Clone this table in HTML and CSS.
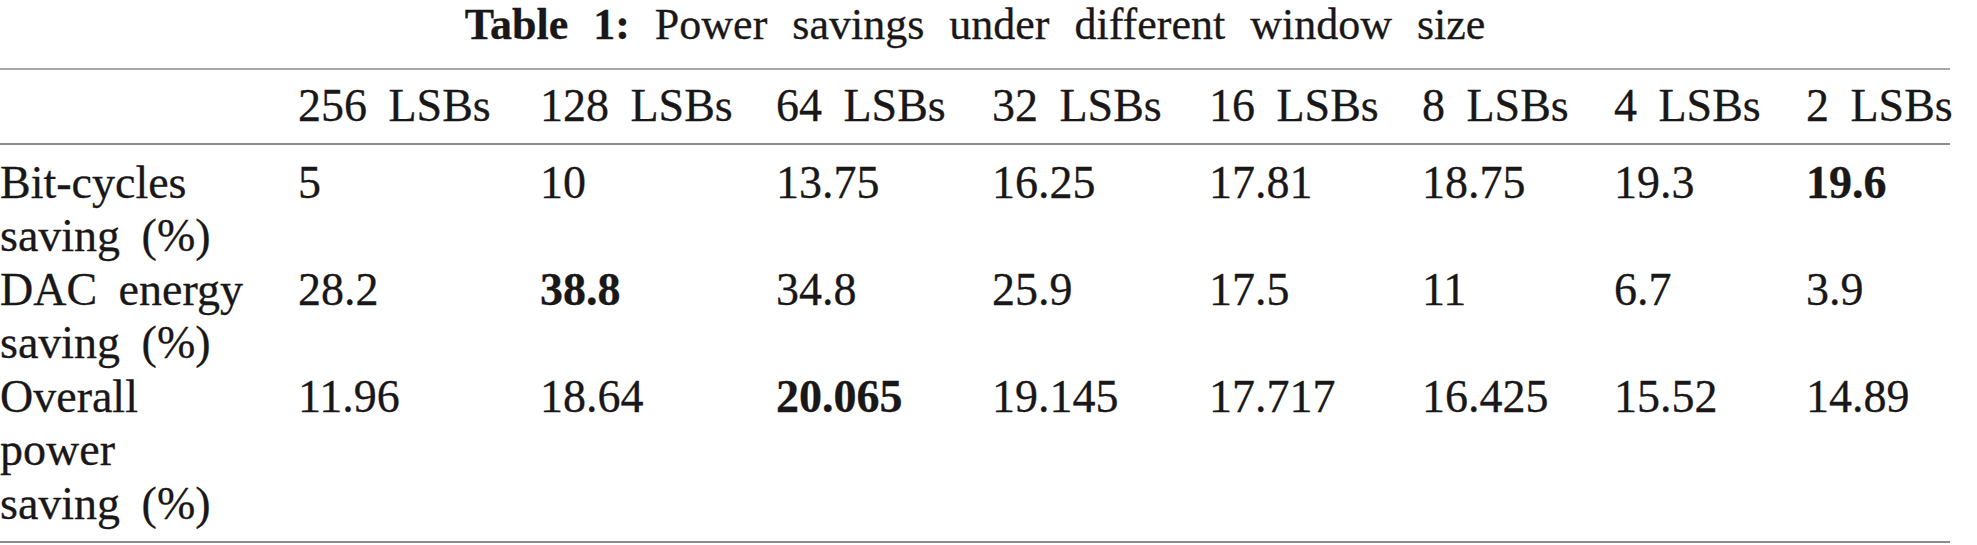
FILE: index.html
```html
<!DOCTYPE html>
<html lang="en">
<head>
    <meta charset="UTF-8">
    <meta name="viewport" content="width=device-width, initial-scale=1.0">
    <title>Table 1: Power savings under different window size</title>
    <link rel="stylesheet" href="styles.css">
</head>
<body>
    <div class="table-wrap">
        <div class="caption"><b>Table 1:</b> Power savings under different window size</div>

        <table class="data-table">
            <colgroup>
                <col class="col-label">
                <col class="col-256">
                <col class="col-128">
                <col class="col-64">
                <col class="col-32">
                <col class="col-16">
                <col class="col-8">
                <col class="col-4">
                <col class="col-2">
            </colgroup>
            <thead>
                <tr>
                    <th></th>
                    <th>256 LSBs</th>
                    <th>128 LSBs</th>
                    <th>64 LSBs</th>
                    <th>32 LSBs</th>
                    <th>16 LSBs</th>
                    <th>8 LSBs</th>
                    <th>4 LSBs</th>
                    <th>2 LSBs</th>
                </tr>
            </thead>
            <tbody>
                <tr class="first">
                    <td class="label">Bit-cycles saving (%)</td>
                    <td>5</td>
                    <td>10</td>
                    <td>13.75</td>
                    <td>16.25</td>
                    <td>17.81</td>
                    <td>18.75</td>
                    <td>19.3</td>
                    <td class="best">19.6</td>
                </tr>
                <tr>
                    <td class="label">DAC energy saving (%)</td>
                    <td>28.2</td>
                    <td class="best">38.8</td>
                    <td>34.8</td>
                    <td>25.9</td>
                    <td>17.5</td>
                    <td>11</td>
                    <td>6.7</td>
                    <td>3.9</td>
                </tr>
                <tr class="last">
                    <td class="label">Overall power saving (%)</td>
                    <td>11.96</td>
                    <td>18.64</td>
                    <td class="best">20.065</td>
                    <td>19.145</td>
                    <td>17.717</td>
                    <td>16.425</td>
                    <td>15.52</td>
                    <td>14.89</td>
                </tr>
            </tbody>
        </table>
    </div>
</body>
</html>
```

FILE: styles.css
```css
* {
    margin: 0;
    padding: 0;
    box-sizing: border-box;
}

body {
    font-family: "Liberation Serif", "Times New Roman", serif;
    background: white;
    color: #1a1718;
    -webkit-text-stroke: 0.3px #1a1718;
}

.table-wrap {
    width: 1950px;
}

.caption {
    font-size: 44px;
    line-height: 49px;
    word-spacing: 14px;
    text-align: center;
    margin-bottom: 19px;
}

.data-table {
    width: 1950px;
    table-layout: fixed;
    border-collapse: collapse;
    border-top: 2px solid #a8a8a8;
    border-bottom: 2px solid #8c8c8c;
    font-size: 46px;
    line-height: 53.5px;
    word-spacing: 10px;
}

.col-label { width: 298px; }
.col-256 { width: 242px; }
.col-128 { width: 236px; }
.col-64 { width: 216px; }
.col-32 { width: 217px; }
.col-16 { width: 213px; }
.col-8 { width: 192px; }
.col-4 { width: 192px; }
.col-2 { width: 144px; }

.data-table th,
.data-table td {
    text-align: left;
    vertical-align: top;
    font-weight: normal;
    white-space: nowrap;
}

.data-table thead th {
    padding-top: 9px;
    padding-bottom: 10px;
    border-bottom: 2px solid #8c8c8c;
}

.data-table td.label {
    white-space: normal;
    padding-right: 50px;
}

.data-table tr.first td {
    padding-top: 11px;
}

.data-table tr.last td {
    padding-bottom: 11px;
}

.data-table td.best {
    font-weight: bold;
}
```
